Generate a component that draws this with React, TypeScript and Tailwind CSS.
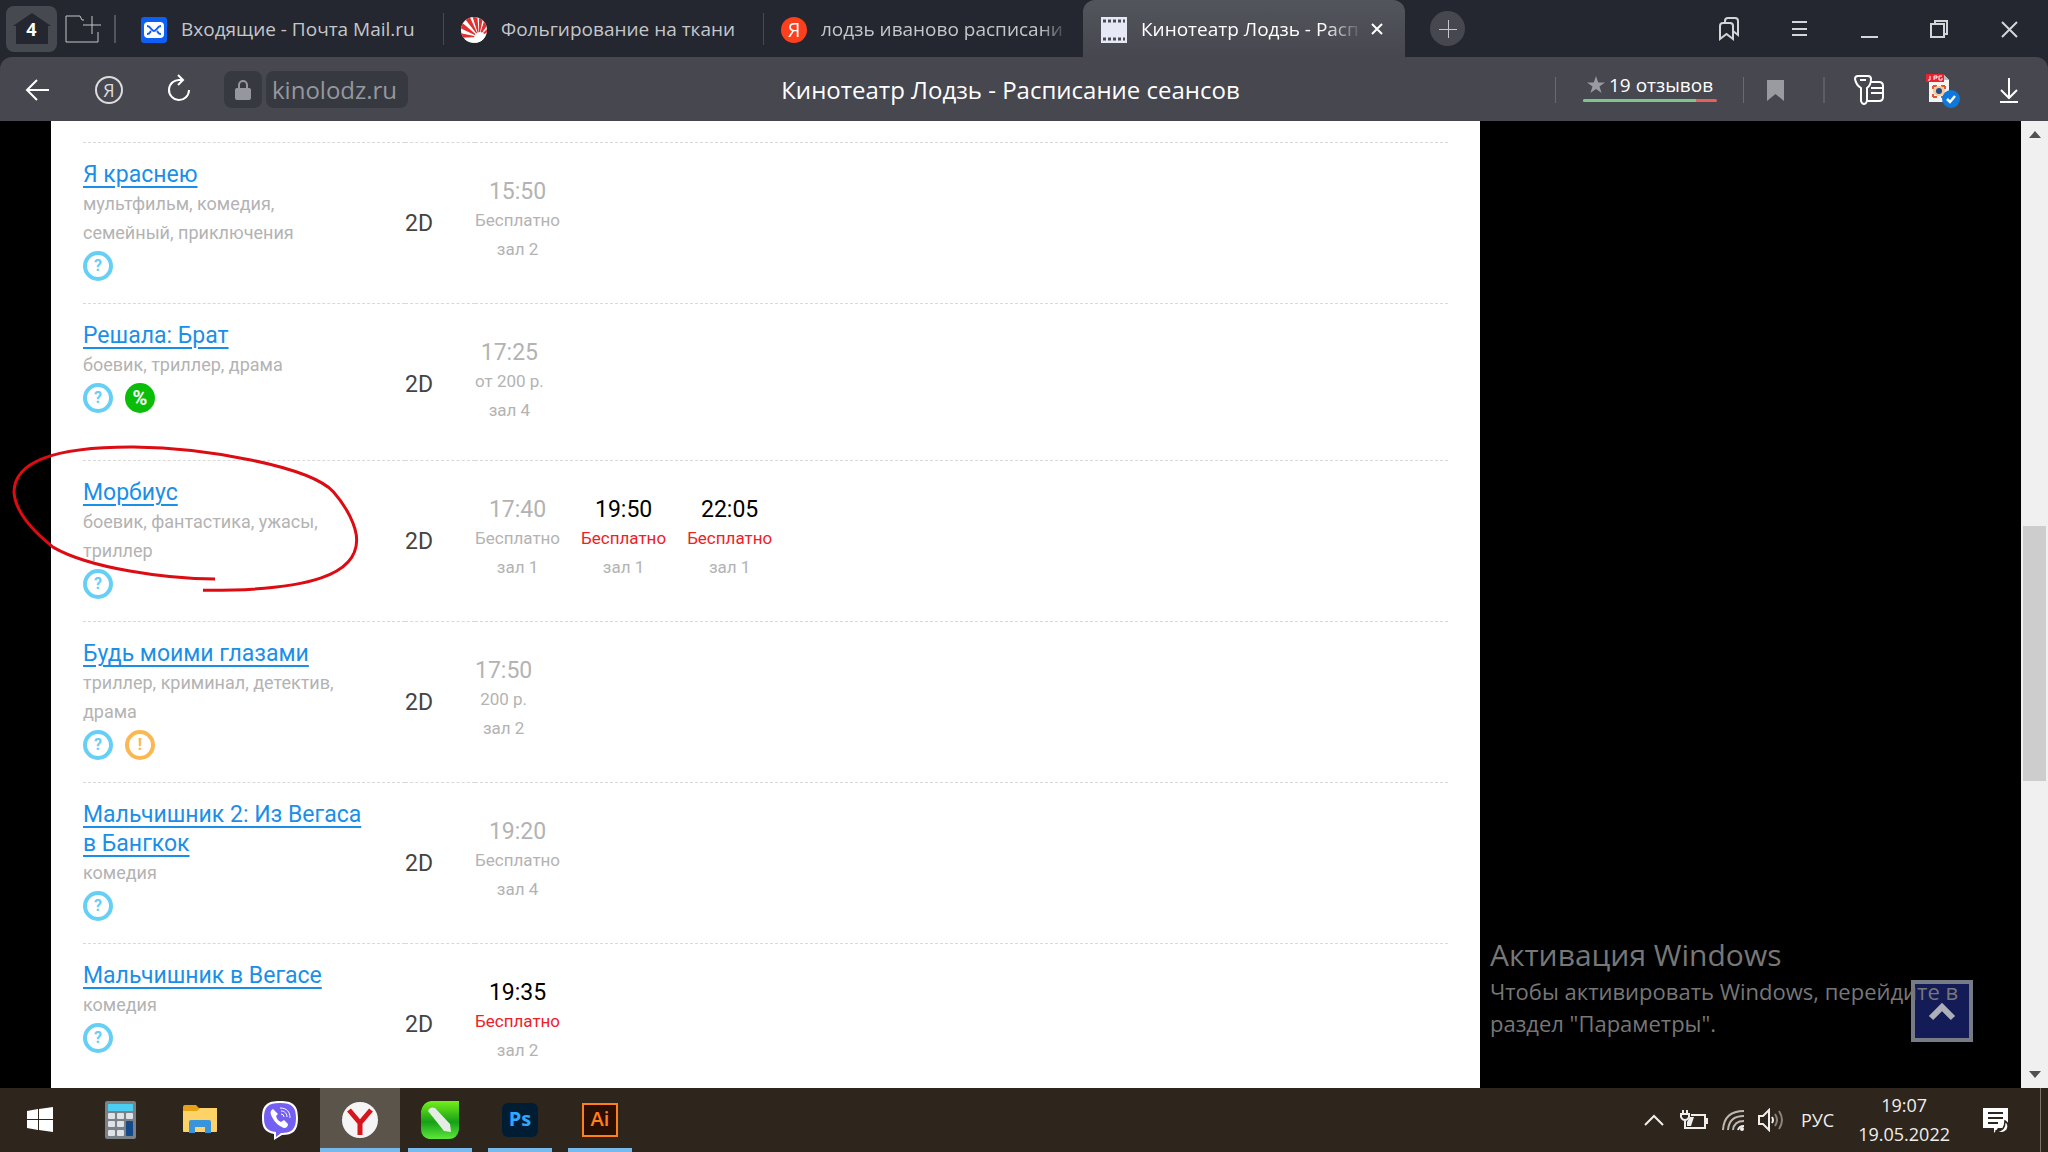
import React from "react";

type Session = { time: string; price: string; hall: string; open?: boolean };
type Film = { title: string; genres: string; badges: Badge[]; sessions: Session[] };
type Badge = "info" | "discount" | "warning";

const films: Film[] = [
  {
    title: "Я краснею",
    genres: "мультфильм, комедия, семейный, приключения",
    badges: ["info"],
    sessions: [{ time: "15:50", price: "Бесплатно", hall: "зал 2" }],
  },
  {
    title: "Решала: Брат",
    genres: "боевик, триллер, драма",
    badges: ["info", "discount"],
    sessions: [{ time: "17:25", price: "от 200 р.", hall: "зал 4" }],
  },
  {
    title: "Морбиус",
    genres: "боевик, фантастика, ужасы, триллер",
    badges: ["info"],
    sessions: [
      { time: "17:40", price: "Бесплатно", hall: "зал 1" },
      { time: "19:50", price: "Бесплатно", hall: "зал 1", open: true },
      { time: "22:05", price: "Бесплатно", hall: "зал 1", open: true },
    ],
  },
  {
    title: "Будь моими глазами",
    genres: "триллер, криминал, детектив, драма",
    badges: ["info", "warning"],
    sessions: [{ time: "17:50", price: "200 р.", hall: "зал 2" }],
  },
  {
    title: "Мальчишник 2: Из Вегаса в Бангкок",
    genres: "комедия",
    badges: ["info"],
    sessions: [{ time: "19:20", price: "Бесплатно", hall: "зал 4" }],
  },
  {
    title: "Мальчишник в Вегасе",
    genres: "комедия",
    badges: ["info"],
    sessions: [{ time: "19:35", price: "Бесплатно", hall: "зал 2", open: true }],
  },
];

const badgeStyle: Record<Badge, { cls: string; sign: string; label: string }> = {
  info: { cls: "border-4 border-[#66cff5] text-[#66cff5] bg-white text-base", sign: "?", label: "Подробнее" },
  discount: { cls: "bg-[#09bd09] text-white text-xl", sign: "%", label: "Скидки" },
  warning: { cls: "border-4 border-[#fbb751] text-[#fbb751] bg-white text-base", sign: "!", label: "Внимание" },
};

function FilmRow({ film }: { film: Film }) {
  return (
    <tr className="h-[157px] border-t border-dashed border-[#d9d9d9] align-top">
      <td className="pt-[17px]">
        <div className="w-[322px]">
          <a href="#film" className="block max-w-[292px] text-[23px] leading-[29px] text-[#1b8fe8] underline decoration-2 underline-offset-4">
            {film.title}
          </a>
          <p className="w-[272px] text-lg leading-[29px] text-[#b3b3b3]">{film.genres}</p>
          <div className="flex gap-3 pt-1 pb-[22px]">
            {film.badges.map((b) => (
              <button
                key={b}
                aria-label={badgeStyle[b].label}
                className={"flex size-[30px] items-center justify-center rounded-full font-bold " + badgeStyle[b].cls}
              >
                <span className="leading-none">{badgeStyle[b].sign}</span>
              </button>
            ))}
          </div>
        </div>
      </td>
      <td className="pt-[66px] text-[23px] leading-[29px] text-[#444]">
        <div className="w-[70px]">2D</div>
      </td>
      <td className="w-full pt-[34px]">
        <ul className="flex gap-[21px]">
          {film.sessions.map((s) => (
            <li key={s.time} className="text-center text-[17px] leading-[29px] text-[#b3b3b3]">
              <div className={s.open ? "text-[23px] leading-[29px] text-black" : "text-[23px] leading-[29px]"}>{s.time}</div>
              <div className={s.open ? "text-[#ee2128]" : ""}>{s.price}</div>
              <div>{s.hall}</div>
            </li>
          ))}
        </ul>
      </td>
    </tr>
  );
}

function Line({ children, size = "size-8", box = "0 0 32 32", width = 2 }: { children: React.ReactNode; size?: string; box?: string; width?: number }) {
  return (
    <svg className={size + " shrink-0"} viewBox={box} fill="none" stroke="currentColor" strokeWidth={width}>
      {children}
    </svg>
  );
}

function MailIcon() {
  return (
    <svg className="size-[26px] shrink-0" viewBox="0 0 26 26">
      <rect width="26" height="26" rx="3" fill="#0d5ff5" />
      <rect x="3" y="5" width="20" height="16" rx="4" fill="#fff" />
      <path d="M6 9c4 0 4 5 7 5s3-5 7-5M6 17c3 0 3-2 4-3M20 17c-3 0-3-2-4-3" stroke="#0d5ff5" strokeWidth="2" fill="none" />
    </svg>
  );
}

function SunIcon() {
  return (
    <svg className="size-[26px] shrink-0" viewBox="0 0 26 26">
      <clipPath id="sun"><circle cx="13" cy="13" r="13" /></clipPath>
      <g clipPath="url(#sun)">
        <rect width="26" height="26" fill="#fff" />
        <path fill="#e0302f" d="M18 20-6 21v-6zM18 20-5 9l3-6zM18 20 1-2l6-2zM18 20 10-5h6zM18 20 18-4h5zM18 20 25-2l5 5zM18 20 32 6v6z" />
        <circle cx="19" cy="21" r="6" fill="#fff" />
      </g>
    </svg>
  );
}

function FilmIcon() {
  return (
    <svg className="size-[26px] shrink-0" viewBox="0 0 26 26">
      <rect width="26" height="26" fill="#e6e9f5" />
      <path d="M2 4h22M2 22h22" stroke="#4b4b55" strokeWidth="3" strokeDasharray="3 2" />
    </svg>
  );
}

function YaIcon() {
  return (
    <span className="flex size-[26px] shrink-0 items-center justify-center rounded-full bg-[#fc3f1d] text-xl leading-none text-white">Я</span>
  );
}

function Tab({ icon, title, className }: { icon: React.ReactNode; title: string; className: string }) {
  return (
    <button className={"flex h-full shrink-0 items-center gap-[14px] pt-0.5 text-left " + className}>
      {icon}
      <span className="min-w-0 flex-1 overflow-hidden whitespace-nowrap">{title}</span>
    </button>
  );
}

function TabBar() {
  return (
    <header className="flex h-[57px] shrink-0 items-center bg-[#24272f] text-[19px] text-[#c5c6ca]">
      <button aria-label="Табло" className="ml-[6px] flex h-[46px] w-[51px] shrink-0 items-center justify-center rounded-lg bg-[#474950]">
        <span className="relative flex items-center justify-center">
          <svg className="h-8 w-10" viewBox="0 0 40 32"><path d="M20 0 39 13h-3v18H4V13H1z" fill="#24272f" /></svg>
          <b className="absolute top-1 text-lg leading-6 text-white">4</b>
        </span>
      </button>
      <button aria-label="Новая группа" className="ml-2 shrink-0">
        <Line size="h-7 w-9" box="0 0 36 28" width={1}>
          <path d="M19 5h-2l-2-4H1v26h32v-10M18 10h18M27 1v18" />
        </Line>
      </button>
      <i className="ml-[13px] h-7 w-0.5 shrink-0 bg-[#53555d]" />
      <nav className="flex h-full min-w-0 items-center">
        <Tab icon={<MailIcon />} title="Входящие - Почта Mail.ru" className="ml-[25px] w-[302px]" />
        <i className="h-8 w-px bg-[#474950]" />
        <Tab icon={<SunIcon />} title="Фольгирование на ткани" className="ml-[17px] w-[302px]" />
        <i className="h-8 w-px bg-[#474950]" />
        <Tab icon={<YaIcon />} title="лодзь иваново расписани" className="ml-[17px] w-[288px] mask-r-from-90%" />
        <div className="ml-[14px] flex h-full w-[322px] shrink-0 items-center rounded-t-xl bg-linear-to-b from-[#53555d] to-[#46474f] pr-5 pl-[18px] text-white">
          <Tab icon={<FilmIcon />} title="Кинотеатр Лодзь - Расп" className="w-[262px] mask-r-from-85%" />
          <button aria-label="Закрыть вкладку" className="ml-1.5">
            <Line size="size-4" box="0 0 16 16"><path d="m3 3 10 10M13 3 3 13" /></Line>
          </button>
        </div>
      </nav>
      <button aria-label="Новая вкладка" className="ml-[25px] flex size-[35px] shrink-0 items-center justify-center rounded-full bg-[#46474f]">
        <Line size="size-5" box="0 0 20 20" width={1}><path d="M1 10.500h18M10.500 1v18" /></Line>
      </button>
      <div className="ml-auto flex shrink-0 gap-[38px] pr-[23px] text-[#d4d5d8]">
        <button aria-label="Закладки">
          <Line><path d="M7 13q0-3 3-3h7q3 0 3 3v13l-6.500-5L7 26zM12 10V8q0-3 3-3h7q3 0 3 3v14l-5-4" /></Line>
        </button>
        <button aria-label="Меню"><Line><path d="M9 9h15M9 16h15M9 22h15" /></Line></button>
        <button aria-label="Свернуть"><Line><path d="M8 24h17" /></Line></button>
        <button aria-label="Развернуть"><Line><path d="M8 11h13v13H8zM12 11V8h12v13h-3" /></Line></button>
        <button aria-label="Закрыть"><Line><path d="m9 9 15 15M24 9 9 24" /></Line></button>
      </div>
    </header>
  );
}

function JpgIcon() {
  return (
    <svg className="h-9 w-9 shrink-0" viewBox="0 0 36 36">
      <path d="M4 2h14l6 6v22H4z" fill="#f4f4f0" />
      <path d="M18 2v6h6z" fill="#bdbdbd" />
      <rect x="1" y="2" width="18" height="8" fill="#ea2331" />
      <path d="M5 4v4H3M9 8V4h3v2H9M17 4h-3v4h3V6" stroke="#fff" strokeWidth="1" fill="none" />
      <path d="M8 14h4M8 14v3M20 14h-4M20 14v3M8 25h4M8 25v-3M20 25h-4M20 25v-3" fill="none" stroke="#df5630" strokeWidth="2" />
      <ellipse cx="14" cy="19" rx="6" ry="5" fill="#f5c99c" />
      <circle cx="14" cy="19" r="3" fill="#254f86" />
      <circle cx="26" cy="27" r="9" fill="#0f78dc" />
      <path d="m22 27 3 3 5-6" stroke="#fff" strokeWidth="2.500" fill="none" />
    </svg>
  );
}

function Toolbar() {
  return (
    <div className="shrink-0 bg-[#24272f]">
      <div className="flex h-16 items-center rounded-t-xl bg-[#46474f] pt-px text-2xl text-white">
        <div className="flex shrink-0 items-center">
          <button aria-label="Назад" className="ml-[22px]">
            <Line><path d="M27 16H5M15 6 5 16l10 10" /></Line>
          </button>
          <button aria-label="Яндекс" className="ml-[41px] flex size-7 items-center justify-center rounded-full border-2 border-[#dcdcde] text-lg leading-none text-[#dcdcde]">Я</button>
          <button aria-label="Обновить" className="ml-10">
            <Line><path d="M26 16a10 10 0 1 1-9-10h3M15 1l5 5-5 5" /></Line>
          </button>
          <button aria-label="Защищённое соединение" className="ml-[29px] flex h-[37px] w-[38px] items-center justify-center rounded-lg bg-[#373941] text-[#96979d]">
            <svg className="h-[22px] w-4" viewBox="0 0 16 22">
              <path d="M4 10V6a4 4 0 0 1 8 0v4" fill="none" stroke="currentColor" strokeWidth="2" />
              <rect y="9" width="16" height="12" rx="2" fill="currentColor" />
            </svg>
          </button>
          <button className="ml-1 flex h-[37px] w-[142px] items-center rounded-lg bg-[#373941] pl-[6px] text-[#96979d]">kinolodz.ru</button>
        </div>
        <h1 className="flex-1 truncate pl-[58px] text-center">Кинотеатр Лодзь - Расписание сеансов</h1>
        <div className="flex shrink-0 items-center">
          <i className="h-[26px] w-px bg-[#6a6b72]" />
          <button className="ml-[27px] flex w-[134px] flex-col pb-1.5">
            <span className="flex items-center gap-1 pl-1 text-[19px] leading-7 whitespace-nowrap">
              <svg className="size-[18px] shrink-0" viewBox="0 0 18 18"><path d="m9 0 2.200 6.500H18l-5.500 4L14.600 17 9 13l-5.600 4 2.100-6.500L0 6.500h6.800z" fill="#9a9ba0" /></svg>
              19 отзывов
            </span>
            <span className="flex h-[3px] w-full overflow-hidden rounded-full bg-[#e8605c]"><span className="w-[84%] bg-[#7cc68d]" /></span>
          </button>
          <i className="ml-[26px] h-[26px] w-px bg-[#6a6b72]" />
          <button aria-label="В закладки" className="ml-[23px]">
            <svg className="h-[22px] w-[17px]" viewBox="0 0 17 22"><path d="M0 1h17v21l-8.500-7L0 22z" fill="#9a9ba0" /></svg>
          </button>
          <i className="ml-[39px] h-[26px] w-0.5 bg-[#5c5d65]" />
          <button aria-label="Пароли" className="ml-7">
            <Line>
              <path d="M5 2h10q3 0 3 3 0 6-4 9v13q-1 3-3 3t-3-3V14Q3 11 2 5q0-3 3-3zM7 6h6" />
              <path d="M18 8h8q4 0 4 4v11q0 4-4 4H14M18 14h12M18 19h12" />
            </Line>
          </button>
          <button aria-label="Сохранить как JPG" className="ml-10"><JpgIcon /></button>
          <button aria-label="Загрузки" className="mr-[23px] ml-8">
            <Line><path d="M16 4v20M8 16l8 8 8-8M7 28h18" /></Line>
          </button>
        </div>
      </div>
    </div>
  );
}

function TaskButton({ label, state, children }: { label: string; state?: "active" | "open"; children: React.ReactNode }) {
  return (
    <button aria-label={label} className={"relative flex h-full w-20 items-center justify-center " + (state === "active" ? "bg-[#5b544b]" : "")}>
      {children}
      {state === "active" && <i className="absolute inset-x-0 bottom-0 h-1 bg-[#76b9ed]" />}
      {state === "open" && <i className="absolute inset-x-2 bottom-0 h-1 bg-[#76b9ed]" />}
    </button>
  );
}

function Taskbar() {
  return (
    <footer className="flex h-16 shrink-0 items-center bg-[#2e251c] text-white">
      <TaskButton label="Пуск">
        <svg className="size-7" viewBox="0 0 28 28" fill="#fff"><path d="M1 5l11-2v10H1zM13 3l14-2v12H13zM1 14h11v10L1 22zM13 14h14v12l-14-2z" /></svg>
      </TaskButton>
      <TaskButton label="Калькулятор">
        <svg className="h-[38px] w-[31px]" viewBox="0 0 31 38">
          <rect width="31" height="38" rx="2" fill="#7a8187" />
          <rect x="3" y="3" width="25" height="7" fill="#4ccdf2" />
          <g fill="#dfe2e6">
            <rect x="3" y="12" width="7" height="6" rx="1" /><rect x="12" y="12" width="7" height="6" rx="1" /><rect x="21" y="12" width="7" height="6" rx="1" />
            <rect x="3" y="20" width="7" height="6" rx="1" /><rect x="12" y="20" width="7" height="6" rx="1" />
            <rect x="3" y="29" width="7" height="6" rx="1" /><rect x="12" y="29" width="7" height="6" rx="1" />
          </g>
          <rect x="21" y="20" width="7" height="15" rx="1" fill="#14498a" />
        </svg>
      </TaskButton>
      <TaskButton label="Проводник">
        <svg className="h-[30px] w-9" viewBox="0 0 36 30">
          <path d="M1 2q0-2 2-2h11l3 3h17q1 0 1 2v22H1z" fill="#e6a117" />
          <path d="M1 6h14l3-3h17v22q0 2-2 2H3q-2 0-2-2z" fill="#fdd368" />
          <path d="M7 28V17q0-2 2-2h18q2 0 2 2v11h-6v-6H13v6z" fill="#3a94dc" />
        </svg>
      </TaskButton>
      <TaskButton label="Viber">
        <svg className="size-10" viewBox="0 0 40 40">
          <path d="M20 1c13 0 18 4 18 17s-5 17-16 17l-8 5v-6C5 32 2 28 2 18 2 5 7 1 20 1z" fill="#fff" />
          <path d="M20 3c12 0 16 4 16 15s-4 15-15 15l-5 4v-5C7 31 4 27 4 18 4 7 8 3 20 3z" fill="#7360f2" />
          <path d="M13 9c-3 2-3 4-1 8 3 6 7 9 12 11 3 0 4-2 4-4l-4-4-3 2c-3-1-4-3-5-6l2-2z" fill="#fff" />
          <path d="M20 8c7 0 10 4 10 10M21 11c4 0 6 3 6 6M21 14q3 0 3 3" fill="none" stroke="#fff" strokeWidth="1" />
        </svg>
      </TaskButton>
      <TaskButton label="Яндекс Браузер" state="active">
        <svg className="size-[38px]" viewBox="0 0 38 38">
          <circle cx="19" cy="19" r="18" fill="#f5f5f5" />
          <path d="M8 9l11 13L30 9M19 21v13" stroke="#d8151b" strokeWidth="5" fill="none" />
        </svg>
      </TaskButton>
      <TaskButton label="CorelDRAW" state="open">
        <svg className="size-[38px]" viewBox="0 0 38 38">
          <linearGradient id="corel" x1="0" y1="0" x2="0" y2="1">
            <stop offset="0" stopColor="#74f01a" /><stop offset=".55" stopColor="#16a016" /><stop offset="1" stopColor="#5ee83b" />
          </linearGradient>
          <path d="M10 0h28v29q-2 9-10 9H8q-8-2-8-10V10Q2 1 10 0z" fill="url(#corel)" />
          <path d="M7 10q2-5 7-3l15 16 1 8-7-1z" fill="#e4ece4" />
        </svg>
      </TaskButton>
      <TaskButton label="Photoshop" state="open">
        <span className="flex h-[34px] w-9 items-center justify-center rounded-md bg-[#001d34] pb-0.5 text-xl leading-none font-bold text-[#31a8ff]">Ps</span>
      </TaskButton>
      <TaskButton label="Illustrator" state="open">
        <span className="flex h-[34px] w-9 items-center justify-center border-2 border-[#ff7f18] bg-[#2a0f05] pb-0.5 text-xl leading-none font-semibold text-[#ff7f18]">Ai</span>
      </TaskButton>
      <div className="ml-auto flex h-full shrink-0 items-center text-lg leading-[29px] text-[#f0eeec]">
        <button aria-label="Скрытые значки">
          <Line size="h-3 w-5" box="0 0 20 12"><path d="m1 11 9-9 9 9" /></Line>
        </button>
        <button aria-label="Батарея" className="ml-4">
          <Line size="h-5 w-7" box="0 0 28 20">
            <path d="M11 5h14v13H5v-4M25 9h2v5" />
            <path d="M3 0v4M7 0v4M1 4h8v3q-1 3-4 3t-4-3zM5 10v5" />
            <path d="M10 7h4l-3 9H7v-4z" fill="currentColor" stroke="none" />
          </Line>
        </button>
        <button aria-label="Wi-Fi" className="ml-[14px]">
          <Line size="size-6" box="0 0 24 24">
            <path d="M1 22Q2 3 22 3M6 22Q7 8 22 8M11 22q1-9 11-9" stroke="#bdb8b2" />
            <path d="M16 22q1-4 6-4" /><circle cx="20" cy="21" r="2" fill="currentColor" stroke="none" />
          </Line>
        </button>
        <button aria-label="Громкость" className="ml-3">
          <Line size="h-6 w-[26px]" box="0 0 26 24">
            <path d="M1 8h4l6-6v20l-6-6H1zM14 9q2 3 0 6" />
            <path d="M17 6q4 6 0 12M21 3q6 9 0 18" stroke="#8a847d" />
          </Line>
        </button>
        <button className="ml-[17px]">РУС</button>
        <time className="ml-6 text-center">19:07<br />19.05.2022</time>
        <button aria-label="Уведомления" className="ml-8">
          <svg className="h-[27px] w-7" viewBox="0 0 28 27">
            <path d="M1 1h25v20H16l-4 5v-5H1z" fill="#fff" />
            <path d="M6 6h15M6 11h15M6 16h10" stroke="#2e251c" strokeWidth="2" />
            <path d="M23 14q5 3 2 9-4 5-10 1 8 0 8-10z" fill="#fff" stroke="#2e251c" strokeWidth="1.500" />
          </svg>
        </button>
        <i className="mr-[7px] ml-[30px] h-full w-px bg-[#7a736b]" />
      </div>
    </footer>
  );
}

export default function App() {
  return (
    <div className="flex h-screen flex-col overflow-hidden bg-black font-['Open_Sans',sans-serif]">
      <TabBar />
      <Toolbar />
      <main className="relative flex min-h-0 flex-1 overflow-hidden">
        <section className="ml-[51px] min-w-0 flex-1 overflow-hidden bg-white px-8 pt-[21px] font-['Roboto',sans-serif]">
          <table className="w-full border-collapse">
            <tbody>
              {films.map((f) => <FilmRow key={f.title} film={f} />)}
            </tbody>
          </table>
        </section>
        <aside className="flex w-[541px] shrink-0 flex-col justify-end pb-[46px] pl-[10px] text-[#777]">
          <div className="relative">
            <button aria-label="Наверх" className="absolute right-12 bottom-0 flex size-[62px] items-center justify-center border-4 border-[#777b86] bg-[#141c58] text-[#aeb0b8]">
              <Line size="h-5 w-7" box="0 0 28 20" width={6}><path d="m3 17 11-11 11 11" /></Line>
            </button>
            <div className="relative pb-[3px]">
              <h2 className="text-[30px] leading-10">Активация Windows</h2>
              <p className="text-[22px] leading-8 whitespace-nowrap">Чтобы активировать Windows, перейдите в<br />раздел "Параметры".</p>
            </div>
          </div>
        </aside>
        <div className="flex w-[27px] shrink-0 flex-col items-center justify-between bg-[#f0f0f0] py-[10px]">
          <svg className="h-[7px] w-3" viewBox="0 0 12 7"><path d="M0 7 6 0l6 7z" fill="#505050" /></svg>
          <i className="mt-[98px] h-[255px] w-[23px] bg-[#cdcdcd]" />
          <svg className="h-[7px] w-3" viewBox="0 0 12 7"><path d="M0 0h12L6 7z" fill="#505050" /></svg>
        </div>
        <svg className="pointer-events-none absolute top-[309px] left-0 h-[170px] w-[367px]" viewBox="0 0 1101 510" fill="none" stroke="#dd0b12" strokeWidth="9">
          <path d="M645 447C500 447 270 415 160 352 95 300 44 240 42 185 44 100 150 50 400 51 620 53 930 110 1000 185 1040 230 1070 290 1070 330 1070 430 940 483 609 481" />
        </svg>
      </main>
      <Taskbar />
    </div>
  );
}
